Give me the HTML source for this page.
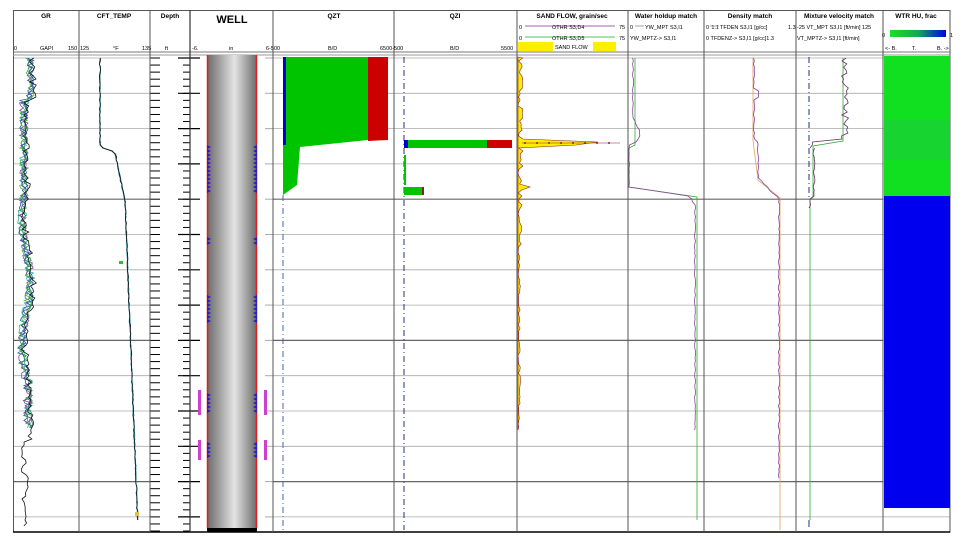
<!DOCTYPE html>
<html><head><meta charset="utf-8"><style>
html,body{margin:0;padding:0;background:#fff;width:963px;height:542px;overflow:hidden}
svg{display:block}
text{font-family:"Liberation Sans",sans-serif;fill:#000}
</style></head><body>
<svg id="s" width="963" height="542" viewBox="0 0 963 542" xmlns="http://www.w3.org/2000/svg">
<defs>
<linearGradient id="pipe" x1="0" x2="1">
<stop offset="0" stop-color="#6a6a6a"/><stop offset="0.55" stop-color="#e4e4e4"/><stop offset="1" stop-color="#6a6a6a"/>
</linearGradient>
<linearGradient id="hu" x1="0" x2="1">
<stop offset="0" stop-color="#22dd22"/><stop offset="0.5" stop-color="#11aa55"/><stop offset="1" stop-color="#0000ee"/>
</linearGradient>
</defs>
<g id="grid"></g>
<rect x="207" y="55" width="50" height="473" fill="url(#pipe)"/>
<rect x="207" y="528" width="50" height="4" fill="#000"/>
<line x1="207.5" y1="55" x2="207.5" y2="528" stroke="#e02020" stroke-width="1.5"/>
<line x1="256.5" y1="55" x2="256.5" y2="528" stroke="#e02020" stroke-width="1.5"/>
<g id="perf"></g>
<rect x="198" y="390" width="3" height="25" fill="#d040d0"/>
<rect x="264" y="390" width="3" height="25" fill="#d040d0"/>
<rect x="198" y="440" width="3" height="20" fill="#d040d0"/>
<rect x="264" y="440" width="3" height="20" fill="#d040d0"/>
<line x1="283" y1="195" x2="283" y2="530" stroke="#4466aa" stroke-dasharray="6,3,1,3"/>
<polygon points="286,57 368,57 368,140 300,147 297,185 283,195 283,145 286,145" fill="#00c400"/>
<polygon points="368,57 388,57 388,140 368,141" fill="#cc0000"/>
<rect x="283" y="57" width="3" height="88" fill="#0000cc"/>
<line x1="404" y1="57" x2="404" y2="530" stroke="#223377" stroke-dasharray="6,3,1,3"/>
<rect x="404" y="140" width="4" height="8" fill="#0000cc"/>
<rect x="408" y="140" width="79" height="8" fill="#00c400"/>
<rect x="487" y="140" width="25" height="8" fill="#cc0000"/>
<rect x="404" y="155" width="2" height="30" fill="#00c400"/>
<rect x="404" y="187" width="19" height="8" fill="#00c400"/>
<rect x="422" y="187" width="2" height="8" fill="#882222"/>
<line x1="809" y1="57" x2="809" y2="200" stroke="#223377" stroke-dasharray="6,3,1,3"/>
<line x1="809" y1="520" x2="809" y2="527" stroke="#223377"/>
<rect x="884" y="56" width="66" height="140" fill="#10e020"/>
<rect x="884" y="120" width="66" height="40" fill="#20c840" opacity="0.5"/>
<rect x="884" y="196" width="66" height="312" fill="#0000ee"/>
<g id="curves"></g>
<g font-size="6.5" font-weight="bold" text-anchor="middle">
<text x="46" y="18">GR</text><text x="114" y="18">CFT_TEMP</text><text x="170" y="18">Depth</text>
<text x="232" y="23" font-size="11">WELL</text><text x="334" y="18">QZT</text><text x="455" y="18">QZI</text>
<text x="572" y="18">SAND FLOW, grain/sec</text><text x="666" y="18">Water holdup match</text>
<text x="750" y="18">Density match</text><text x="839" y="18">Mixture velocity match</text><text x="916" y="18">WTR HU, frac</text>
</g>
<g font-size="5.5">
<text x="14" y="50">0</text><text x="40" y="50">GAPI</text><text x="68" y="50">150</text><text x="80" y="50">125</text>
<text x="113" y="50">°F</text><text x="142" y="50">135</text><text x="165" y="50">ft</text>
<text x="192" y="50">-6.</text><text x="229" y="50">in</text><text x="266" y="50">6-500</text>
<text x="328" y="50">B/D</text><text x="380" y="50">6500-500</text><text x="450" y="50">B/D</text><text x="501" y="50">5500</text>
<text x="519" y="29">0</text><text x="552" y="29">OTHR  S3,D4</text><text x="619" y="29">75</text>
<text x="519" y="40">0</text><text x="552" y="40">OTHR  S3,D5</text><text x="619" y="40">75</text>
<text x="630" y="29">0</text><text x="645" y="29">YW_MPT  S3,I1</text><text x="719" y="29" text-anchor="end">1.1</text>
<text x="630" y="40">YW_MPTZ-&gt;  S3,I1</text>
<text x="706" y="29">0</text><text x="720" y="29">TFDEN  S3,I1 [g/cc]</text><text x="788" y="29">1.3</text>
<text x="706" y="40">0  TFDENZ-&gt;  S3,I1  [g/cc]1.3</text>
<text x="797" y="29">-25  VT_MPT  S3,I1 [ft/min]  125</text>
<text x="797" y="40">VT_MPTZ-&gt;  S3,I1  [ft/min]</text>
<text x="885" y="50">&lt;- B.</text><text x="912" y="50">T.</text><text x="937" y="50">B. -&gt;</text>
<text x="882" y="37">0</text><text x="950" y="37">1</text>
</g>
<line x1="525" y1="26" x2="615" y2="26" stroke="#883388" stroke-width="0.8"/>
<line x1="525" y1="37" x2="615" y2="37" stroke="#22aa22" stroke-width="0.8"/>
<line x1="635" y1="26" x2="644" y2="26" stroke="#888" stroke-width="0.8"/>
<line x1="710" y1="26" x2="719" y2="26" stroke="#888" stroke-width="0.8"/>
<rect x="518" y="42" width="98" height="9" fill="#ffee00"/>
<rect x="553" y="42" width="40" height="9" fill="#fff"/>
<text x="555" y="49" font-size="5.5">SAND FLOW</text>
<rect x="890" y="30" width="56" height="7" fill="url(#hu)"/>
</svg>
<script>
(function(){
var NS="http://www.w3.org/2000/svg";
function el(p,n,a){var e=document.createElementNS(NS,n);for(var k in a)e.setAttribute(k,a[k]);document.getElementById(p).appendChild(e);return e;}
var seed=7;function r(){seed=(seed*16807)%2147483647;return seed/2147483647;}
var cols=[13,79,150,190,273,394,517,628,704,796,883,950];
var B=532;
for(var i=0;i<14;i++){var y=58+i*35.3;var dark=(i==4||i==8||i==12);
 [[13,150],[273,883]].forEach(function(s){el("grid","line",{x1:s[0],x2:s[1],y1:y,y2:y,stroke:dark?"#666":"#aaa","stroke-width":dark?1.2:0.8});});
 el("grid","line",{x1:883,x2:950,y1:y,y2:y,stroke:"#aaa","stroke-width":0.8});
 el("grid","line",{x1:178,x2:200,y1:y,y2:y,stroke:"#000","stroke-width":1.2});
 el("grid","line",{x1:265,x2:273,y1:y,y2:y,stroke:"#aaa","stroke-width":1});
}
for(var y=58;y<B;y+=7.06){el("grid","line",{x1:150,x2:160,y1:y,y2:y,stroke:"#000","stroke-width":1});el("grid","line",{x1:183,x2:190,y1:y,y2:y,stroke:"#000","stroke-width":1});}
el("grid","rect",{x:13.5,y:10.5,width:936.5,height:521.5,fill:"none",stroke:"#555","stroke-width":1});
el("grid","line",{x1:13,x2:950,y1:52,y2:52,stroke:"#777","stroke-width":1});
el("grid","line",{x1:13,x2:950,y1:55,y2:55,stroke:"#999","stroke-width":1});
el("grid","line",{x1:13,x2:950,y1:532,y2:532,stroke:"#000","stroke-width":1.5});
cols.forEach(function(x,j){if(j==0||j==cols.length-1)return;el("grid","line",{x1:x,x2:x,y1:10,y2:532,stroke:"#555","stroke-width":1});});
el("grid","line",{x1:190,x2:190,y1:10,y2:532,stroke:"#333","stroke-width":1.2});
[[145,190],[237,245],[295,320],[393,413],[442,458]].forEach(function(p){for(var y=p[0];y<p[1];y+=4){
 el("perf","polygon",{points:"207,"+y+" 211,"+(y+2)+" 207,"+(y+4),fill:"#2222cc"});
 el("perf","polygon",{points:"257,"+y+" 253,"+(y+2)+" 257,"+(y+4),fill:"#2222cc"});}});
function poly(pts,col,w){el("curves","polyline",{points:pts.map(function(p){return p[0].toFixed(1)+","+p[1].toFixed(1)}).join(" "),fill:"none",stroke:col,"stroke-width":w||0.8});}
function curve(f,amp,col,y0,y1,step){var p=[];for(var y=y0;y<=y1;y+=step){p.push([f(y)+(r()-0.5)*amp,y]);}poly(p,col);}
var grc=["#227788","#33aa99","#884499","#2255aa","#44bb44"];
function grf(y){if(y<100)return 30;if(y<200)return 24;if(y<380)return 26+4*Math.sin(y/20);if(y<430)return 28;return 26;}
grc.forEach(function(c){curve(grf,9,c,58,430,2.5);});
curve(function(y){return y<440?grf(y)+3:25},7,"#111",58,528,3);
function tf(y){if(y<147)return 100;if(y<152)return 100+(y-147)*3;if(y<200)return 115+(y-152)*0.2;return 125+(y-200)/330*13;}
["#33aacc","#227777","#111"].forEach(function(c){curve(tf,1.2,c,58,520,3);});
el("curves","rect",{x:119,y:261,width:4,height:3,fill:"#33bb33"});
el("curves","rect",{x:135,y:512,width:4,height:4,fill:"#e0c040"});
var sp=[[518,57]];for(var y=58;y<430;y+=3){var v=518+(y<250?r()*5:r()*2.5);if(y>139&&y<148)v=620-Math.abs(y-143)*22;if(Math.abs(y-187)<3)v=530;sp.push([v,y]);}
sp.push([518,430]);
el("curves","polygon",{points:sp.map(function(p){return p.join(",")}).join(" "),fill:"#ffee00",stroke:"#882222","stroke-width":0.6});
poly([[522,143],[620,143]],"#882222",0.6);
for(var x=525;x<620;x+=12)el("curves","circle",{cx:x,cy:143,r:1,fill:"#882222"});
poly([[635,58],[635,145],[629,148],[629,187],[697,197],[697,520]],"#33aa33");
curve(function(y){if(y<120)return 633;if(y<145)return 637+3*Math.sin(y/5);if(y<187)return 629;if(y<197)return 629+(y-187)*6.5;if(y<205)return 692;return 695;},1.2,"#884499",58,430,3);
poly([[753,58],[753,140],[758,180],[780,198],[780,530]],"#e0a060");
curve(function(y){if(y<140)return 754+(y>90&&y<100?4:0);if(y<180)return 758;if(y<198)return 760+(y-180);return 779;},1.5,"#884499",58,480,3);
poly([[843,58],[843,141],[813,146],[813,197],[810,200],[810,520]],"#33aa33");
curve(function(y){if(y<141)return 845;if(y<197)return 814;return 810;},8,"#663366",58,148,3);
curve(function(y){return y<197?814:810},2,"#663366",148,210,3);
})();
</script>
</body></html>
